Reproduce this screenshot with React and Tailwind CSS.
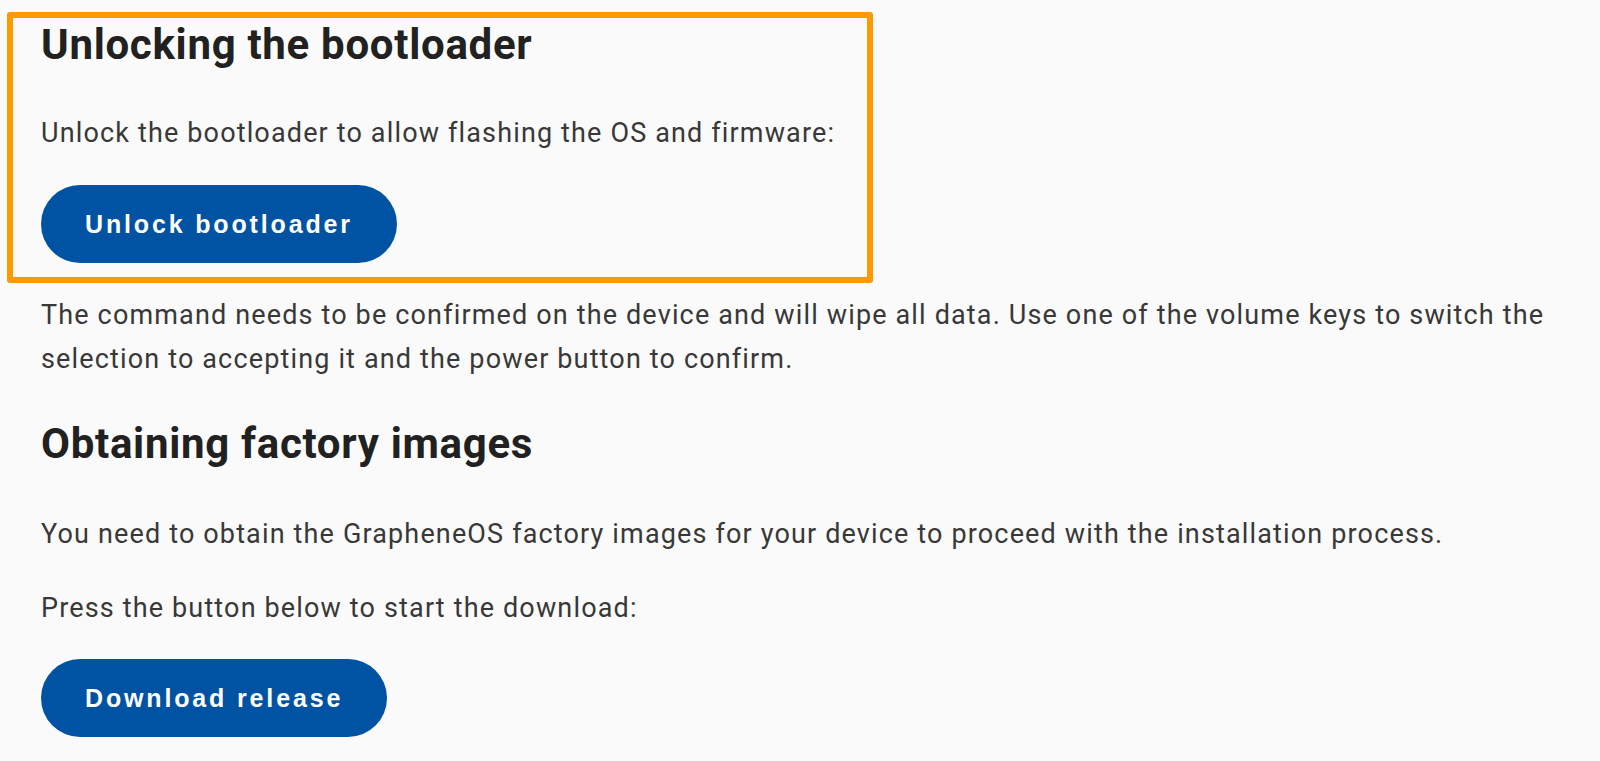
import React from "react";

const Button = ({ children }) => (
  <button className="h-[78px] px-11 rounded-full bg-[#0053a2] text-white font-['Liberation_Sans',Arial,sans-serif] font-bold text-[25px] leading-none tracking-[2.85px] flex items-center">
    {children}
  </button>
);

export default function App() {
  return (
    <div className="min-h-screen bg-[#fafafa] font-['Roboto',sans-serif] pl-[41px] pr-[40px] pt-[20px] pb-[24px]">
      {/* highlighted step */}
      <section className="relative">
        <div className="absolute -left-[34px] -top-[8px] w-[866px] h-[271px] border-[6px] border-[#ff9900] rounded-[3px] pointer-events-none" />
        <h2 className="text-[42px] leading-[50px] font-bold tracking-[0.7px] text-[#212121]">
          Unlocking the bootloader
        </h2>
        <p className="mt-[41px] text-[27px] leading-[44px] tracking-[1.15px] text-[#383838]">
          Unlock the bootloader to allow flashing the OS and firmware:
        </p>
        <div className="mt-[30px]">
          <Button>Unlock bootloader</Button>
        </div>
      </section>

      <p className="mt-[30px] text-[27px] leading-[44px] tracking-[1.15px] text-[#383838]">
        The command needs to be confirmed on the device and will wipe all data. Use one of the volume keys to switch the
        selection to accepting it and the power button to confirm.
      </p>

      <h2 className="mt-[38px] text-[42px] leading-[50px] font-bold tracking-[0.7px] text-[#212121]">
        Obtaining factory images
      </h2>
      <p className="mt-[43px] text-[27px] leading-[44px] tracking-[1.15px] text-[#383838]">
        You need to obtain the GrapheneOS factory images for your device to proceed with the installation process.
      </p>
      <p className="mt-[30px] text-[27px] leading-[44px] tracking-[1.15px] text-[#383838]">
        Press the button below to start the download:
      </p>
      <div className="mt-[29px]">
        <Button>Download release</Button>
      </div>
    </div>
  );
}
